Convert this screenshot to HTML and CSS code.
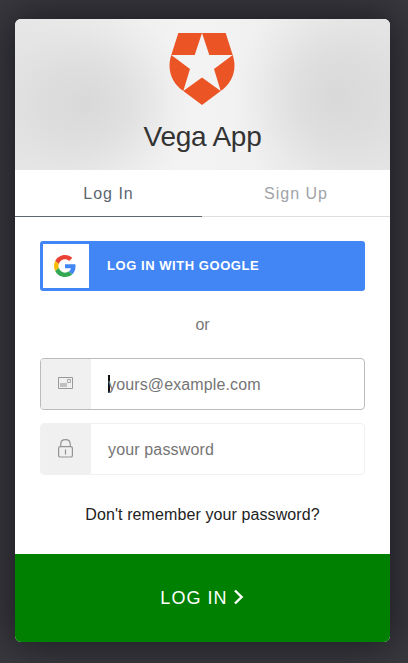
FILE: index.html
```html
<!DOCTYPE html>
<html lang="en">
<head>
<meta charset="utf-8">
<title>Vega App</title>
<link rel="stylesheet" href="styles.css">
</head>
<body>
<main class="card">
  <header class="header">
    <svg class="logo" viewBox="0 0 66 72" fill="#eb5424">
      <path d="M9.3 0H33L25.7 22H2.3ZM33 0H56.7L63.7 22H40.3ZM2.3 22L21 36 14.3 58C3 50-2.6 37 2.3 22ZM63.7 22L45 36 51.7 58C63 50 68.6 37 63.7 22ZM14.3 58L33 44.5 51.7 58 33 72Z"/>
    </svg>
    <h1 class="title">Vega App</h1>
  </header>
  <nav class="tabs">
    <a class="tab tab-active">Log In</a>
    <a class="tab">Sign Up</a>
  </nav>
  <form class="form">
    <button type="button" class="google">
      <span class="google-icon">
        <svg width="22" height="22" viewBox="0 0 48 48">
          <path fill="#EA4335" d="M24 9.5c3.54 0 6.71 1.22 9.21 3.6l6.85-6.85C35.9 2.38 30.47 0 24 0 14.62 0 6.51 5.38 2.56 13.22l7.98 6.19C12.43 13.72 17.74 9.5 24 9.5z"/>
          <path fill="#4285F4" d="M46.98 24.55c0-1.57-.15-3.09-.38-4.55H24v9.02h12.94c-.58 2.96-2.26 5.48-4.78 7.18l7.73 6c4.51-4.18 7.09-10.36 7.09-17.65z"/>
          <path fill="#FBBC05" d="M10.53 28.59c-.48-1.45-.76-2.99-.76-4.59s.27-3.14.76-4.59l-7.98-6.19C.92 16.46 0 20.12 0 24c0 3.88.92 7.54 2.56 10.78l7.97-6.19z"/>
          <path fill="#34A853" d="M24 48c6.48 0 11.93-2.13 15.89-5.81l-7.73-6c-2.15 1.45-4.92 2.3-8.16 2.3-6.26 0-11.57-4.22-13.47-9.91l-7.98 6.19C6.51 42.62 14.62 48 24 48z"/>
        </svg>
      </span>
      <span class="google-label">LOG IN WITH GOOGLE</span>
    </button>
    <p class="or">or</p>
    <div class="field field-focus">
      <span class="field-icon">
        <svg width="15" height="14" viewBox="0 0 15 14">
          <path d="M.5 1.5h14v11H.5z" fill="none" stroke="#999"/>
          <path d="M2 7h7v4H2z" fill="#c0c0c0"/>
          <path d="M9.5 3.5h3v3h-3z" fill="none" stroke="#a5a5a5"/>
        </svg>
      </span>
      <span class="caret"></span>
      <span class="placeholder placeholder-email">yours@example.com</span>
    </div>
    <div class="field">
      <span class="field-icon">
        <svg width="15" height="19" viewBox="0 0 15 19" fill="none" stroke="#939393" stroke-width="1.2">
          <rect x=".6" y="7.6" width="13.8" height="10.4" rx="1.6"/>
          <path d="M2.7 7.6V5.4C2.7 2.6 4.7.6 7.5.6s4.8 2 4.8 4.8v2.2M7.5 10.5v5"/>
        </svg>
      </span>
      <span class="placeholder">your password</span>
    </div>
    <a class="forgot">Don't remember your password?</a>
  </form>
  <button type="button" class="submit">
    <span>LOG IN</span>
    <svg class="chevron" width="10" height="16" viewBox="0 0 10 16" fill="none" stroke="#fff" stroke-width="2.4"><path d="M1 1.5L7.6 8 1 14.5"/></svg>
  </button>
</main>
</body>
</html>
```
FILE: styles.css
```css
* { box-sizing: border-box; }
body {
  margin: 0;
  height: 663px;
  padding: 19px 18px 0 15px;
  overflow: hidden;
  background: #39393e;
  font-family: "Liberation Sans", Arial, sans-serif;
  font-size: 16px;
}
.card {
  width: 375px;
  height: 623px;
  display: flex;
  flex-direction: column;
  border-radius: 6px;
  background: #fff;
  overflow: hidden;
  box-shadow: 0 0 40px 4px #1b1b23;
}
.header {
  height: 151px;
  flex: none;
  display: flex;
  flex-direction: column;
  align-items: center;
  padding-top: 14px;
  background:
    radial-gradient(ellipse 110px 95px at 70px 84px, rgba(212, 212, 212, .8) 0%, rgba(212, 212, 212, .55) 40%, rgba(212, 212, 212, .15) 78%, rgba(212, 212, 212, 0) 100%),
    radial-gradient(ellipse 105px 105px at 322px 78px, rgba(212, 212, 212, .8) 0%, rgba(212, 212, 212, .55) 40%, rgba(212, 212, 212, .15) 78%, rgba(212, 212, 212, 0) 100%),
    linear-gradient(90deg, #e6e6e6, #f3f3f3 45%, #f2f2f2 58%, #e6e6e6);
}
.logo { width: 66px; height: 72px; margin-right: 1px; }
.title {
  margin: 15px 0 0;
  font-size: 28px;
  line-height: 34px;
  font-weight: 400;
  letter-spacing: -.25px;
  color: #333;
}
.tabs { display: flex; height: 47px; flex: none; }
.tab {
  width: 188px;
  text-align: center;
  line-height: 48px;
  letter-spacing: 1px;
  color: #a0a3a8;
  box-shadow: inset 0 -1px #dfdfdf;
}
.tab-active { width: 187px; color: #5c666f; box-shadow: inset 0 -1px #5c666f; }
.form {
  height: 337px;
  flex: none;
  display: flex;
  flex-direction: column;
  padding: 24px 25px 0;
}
button { border: 0; font-family: inherit; color: #fff; }
.google {
  display: flex;
  align-items: center;
  height: 50px;
  padding: 3px;
  border-radius: 3px;
  background: #4285f4;
}
.google-icon {
  width: 46px;
  height: 44px;
  display: flex;
  align-items: center;
  justify-content: center;
  padding: 0 2px 1px 0;
  background: #fff;
}
.google-label {
  margin-left: 18px;
  padding-bottom: 2px;
  font-size: 13px;
  font-weight: 700;
  letter-spacing: .55px;
}
.or { margin: 24px 0; line-height: 19px; text-align: center; color: #777; }
.field {
  height: 52px;
  margin-bottom: 13px;
  display: flex;
  align-items: center;
  border: 1px solid #f1f1f1;
  border-radius: 4px;
  overflow: hidden;
}
.field-focus { border-color: #bbb; }
.field-icon {
  width: 50px;
  height: 50px;
  margin-right: 17px;
  display: flex;
  align-items: center;
  justify-content: center;
  padding: 0 1px 2px 0;
  background: #f0f0f0;
}
.caret { width: 2px; height: 18px; margin-right: -2px; background: #111; }
.placeholder { padding-top: 2px; letter-spacing: .15px; color: #757575; }
.placeholder-email { letter-spacing: .13px; }
.forgot { margin-top: 17px; line-height: 20px; letter-spacing: .1px; text-align: center; color: #222; }
.submit {
  height: 88px;
  flex: none;
  display: flex;
  align-items: center;
  justify-content: center;
  padding: 0 7px 0 6px;
  background: #008000;
  font-size: 18px;
  letter-spacing: 1.05px;
}
.submit span { line-height: 20px; }
.chevron { margin: 0 0 2px 6px; }
```
